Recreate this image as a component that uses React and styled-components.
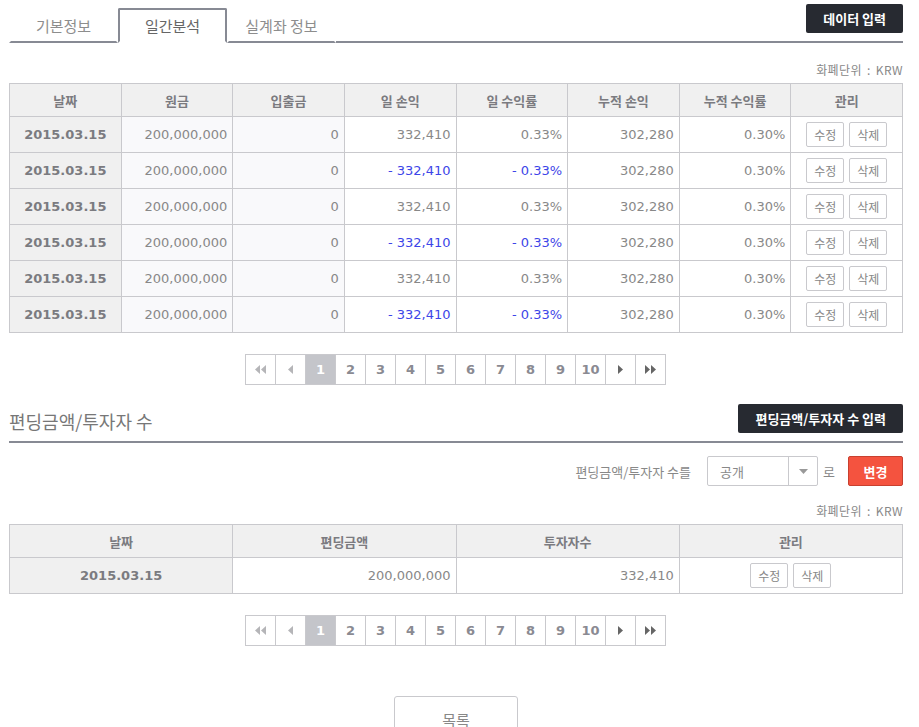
import React, { useState } from 'react'
import styled, { createGlobalStyle } from 'styled-components'

const GlobalStyle = createGlobalStyle`
  body {
    margin: 0;
    background: #fff;
    font-family: "DejaVu Sans", "Noto Sans CJK KR", sans-serif;
    color: #888;
  }
  * { box-sizing: border-box; }
`

const rows = [
  { date: '2015.03.15', principal: '200,000,000', flow: '0', day: '332,410', dayRate: '0.33%', cum: '302,280', cumRate: '0.30%', neg: false },
  { date: '2015.03.15', principal: '200,000,000', flow: '0', day: '332,410', dayRate: '0.33%', cum: '302,280', cumRate: '0.30%', neg: true },
  { date: '2015.03.15', principal: '200,000,000', flow: '0', day: '332,410', dayRate: '0.33%', cum: '302,280', cumRate: '0.30%', neg: false },
  { date: '2015.03.15', principal: '200,000,000', flow: '0', day: '332,410', dayRate: '0.33%', cum: '302,280', cumRate: '0.30%', neg: true },
  { date: '2015.03.15', principal: '200,000,000', flow: '0', day: '332,410', dayRate: '0.33%', cum: '302,280', cumRate: '0.30%', neg: false },
  { date: '2015.03.15', principal: '200,000,000', flow: '0', day: '332,410', dayRate: '0.33%', cum: '302,280', cumRate: '0.30%', neg: true },
]

const tabs = ['기본정보', '일간분석', '실계좌 정보']

export default function App() {
  const [tab, setTab] = useState(1)
  const [page, setPage] = useState(1)
  const [page2, setPage2] = useState(1)

  return (
    <>
      <GlobalStyle />
      <Page>
        <TopBar>
          <Tabs>
            {tabs.map((t, i) => (
              <Tab key={t} $active={i === tab} onClick={() => setTab(i)}>{t}</Tab>
            ))}
          </Tabs>
          <DarkButton $top={4}>데이터 입력</DarkButton>
        </TopBar>

        <Unit $top={19}>화폐단위 : KRW</Unit>
        <Table>
          <colgroup>
            {Array.from({ length: 8 }).map((_, i) => <col key={i} style={{ width: '12.5%' }} />)}
          </colgroup>
          <thead>
            <tr>
              {['날짜', '원금', '입출금', '일 손익', '일 수익률', '누적 손익', '누적 수익률', '관리'].map(h => (
                <Th key={h}>{h}</Th>
              ))}
            </tr>
          </thead>
          <tbody>
            {rows.map((r, i) => (
              <Tr key={i}>
                <DateCell>{r.date}</DateCell>
                <Td $tint>{r.principal}</Td>
                <Td $tint>{r.flow}</Td>
                <Td $neg={r.neg}>{r.neg ? '- ' : ''}{r.day}</Td>
                <Td $neg={r.neg}>{r.neg ? '- ' : ''}{r.dayRate}</Td>
                <Td>{r.cum}</Td>
                <Td>{r.cumRate}</Td>
                <ActionCell>
                  <SmallButton>수정</SmallButton>
                  <SmallButton>삭제</SmallButton>
                </ActionCell>
              </Tr>
            ))}
          </tbody>
        </Table>

        <Pagination page={page} onChange={setPage} />

        <SectionHead>
          <SectionTitle>편딩금액/투자자 수</SectionTitle>
          <DarkButton>편딩금액/투자자 수 입력</DarkButton>
        </SectionHead>

        <FilterRow>
          <FilterLabel>편딩금액/투자자 수를</FilterLabel>
          <Select>
            <SelectValue>공개</SelectValue>
            <SelectArrow>
              <svg width="9" height="5" viewBox="0 0 9 5"><path d="M0 0h9L4.5 5z" fill="#999" /></svg>
            </SelectArrow>
          </Select>
          <Suffix>로</Suffix>
          <RedButton>변경</RedButton>
        </FilterRow>

        <Unit $top={17}>화폐단위 : KRW</Unit>
        <Table>
          <colgroup>
            {Array.from({ length: 4 }).map((_, i) => <col key={i} style={{ width: '25%' }} />)}
          </colgroup>
          <thead>
            <tr>
              {['날짜', '편딩금액', '투자자수', '관리'].map(h => <Th key={h}>{h}</Th>)}
            </tr>
          </thead>
          <tbody>
            <Tr>
              <DateCell>2015.03.15</DateCell>
              <Td>200,000,000</Td>
              <Td>332,410</Td>
              <ActionCell>
                <SmallButton>수정</SmallButton>
                <SmallButton>삭제</SmallButton>
              </ActionCell>
            </Tr>
          </tbody>
        </Table>

        <Pagination page={page2} onChange={setPage2} />

        <Footer>
          <ListButton>목록</ListButton>
        </Footer>
      </Page>
    </>
  )
}

function Pagination({ page, onChange }) {
  return (
    <Pager>
      <PageCell><Arrow dir="left" double faded /></PageCell>
      <PageCell><Arrow dir="left" faded /></PageCell>
      {Array.from({ length: 10 }).map((_, i) => (
        <PageCell key={i} $active={page === i + 1} onClick={() => onChange(i + 1)}>{i + 1}</PageCell>
      ))}
      <PageCell><Arrow dir="right" /></PageCell>
      <PageCell><Arrow dir="right" double /></PageCell>
    </Pager>
  )
}

function Arrow({ dir, double, faded }) {
  const color = faded ? '#b5b5b8' : '#666'
  const tri = (x) => dir === 'left'
    ? `M${x + 5} 0v9L${x} 4.5z`
    : `M${x} 0v9L${x + 5} 4.5z`
  return (
    <svg width={double ? 11 : 5} height="9" viewBox={`0 0 ${double ? 11 : 5} 9`}>
      <path d={tri(0)} fill={color} />
      {double && <path d={tri(6)} fill={color} />}
    </svg>
  )
}

const Page = styled.div`
  width: 894px;
  margin-left: 9px;
  font-size: 13px;
`

const TopBar = styled.div`
  display: flex;
  justify-content: space-between;
  align-items: flex-start;
  height: 43px;
  border-bottom: 2px solid #878a94;
`

const Tabs = styled.div`
  display: flex;
  align-self: flex-end;
  margin-bottom: -2px;
`

const Tab = styled.div`
  width: 109px;
  height: 35px;
  display: flex;
  align-items: center;
  justify-content: center;
  padding-bottom: 1px;
  font-family: "Noto Sans CJK KR", sans-serif;
  font-size: 15px;
  cursor: pointer;
  color: ${p => (p.$active ? '#666' : '#8d8d8d')};
  background: #fff;
  border: 2px solid ${p => (p.$active ? '#878a94' : 'transparent')};
  border-bottom: 2px solid ${p => (p.$active ? '#fff' : '#878a94')};
  border-radius: 2px 2px 0 0;
`

const DarkButton = styled.button`
  margin-top: ${p => p.$top || 0}px;
  height: 29px;
  padding: 0 17px;
  border: none;
  border-radius: 2px;
  background: #272a31;
  color: #fff;
  font-family: "Noto Sans CJK KR", sans-serif;
  font-size: 13px;
  font-weight: 700;
  cursor: pointer;
`

const Unit = styled.div`
  margin-top: ${p => p.$top}px;
  margin-bottom: 5px;
  text-align: right;
  font-family: "Noto Sans CJK KR", sans-serif;
  font-size: 12px;
  line-height: 16px;
  letter-spacing: 0.4px;
  word-spacing: 2px;
  color: #888;
`

const Table = styled.table`
  width: 100%;
  border-collapse: collapse;
  table-layout: fixed;
  border: 1px solid #c9c9cd;
`

const Th = styled.th`
  height: 33px;
  background: #f0f0f0;
  border: 1px solid #c9c9cd;
  font-family: "Noto Sans CJK KR", sans-serif;
  font-size: 13px;
  font-weight: 700;
  color: #7b7b80;
  text-align: center;
  padding: 0;
`

const Tr = styled.tr`
  height: 36px;
`

const Td = styled.td`
  border: 1px solid #c9c9cd;
  padding: 0 5px 0 0;
  text-align: right;
  font-size: 13px;
  color: ${p => (p.$neg ? '#3d45e8' : '#888')};
  background: ${p => (p.$tint ? '#f9f9fb' : '#fff')};
  white-space: nowrap;
`

const DateCell = styled.td`
  border: 1px solid #c9c9cd;
  background: #f0f0f0;
  text-align: center;
  font-weight: 700;
  color: #7b7b80;
  font-size: 13px;
`

const ActionCell = styled.td`
  border: 1px solid #c9c9cd;
  text-align: center;
  padding: 0;
  font-size: 0;
  & > button + button { margin-left: 5px; }
`

const SmallButton = styled.button`
  width: 38px;
  height: 25px;
  padding: 0;
  background: #fff;
  border: 1px solid #c9c9cd;
  border-radius: 2px;
  font-family: "Noto Sans CJK KR", sans-serif;
  font-size: 12px;
  color: #888;
  cursor: pointer;
  vertical-align: middle;
`

const Pager = styled.div`
  display: flex;
  justify-content: center;
  margin-top: 21px;
`

const PageCell = styled.div`
  width: 31px;
  height: 31px;
  margin-left: -1px;
  display: flex;
  align-items: center;
  justify-content: center;
  border: 1px solid #c9c9cd;
  background: ${p => (p.$active ? '#c4c5ca' : '#fff')};
  color: ${p => (p.$active ? '#fff' : '#8a8a92')};
  font-weight: 700;
  font-size: 13px;
  cursor: pointer;
`

const SectionHead = styled.div`
  display: flex;
  justify-content: space-between;
  align-items: flex-end;
  margin-top: 19px;
  padding-bottom: 8px;
  border-bottom: 2px solid #878a94;
`

const SectionTitle = styled.h3`
  margin: 0;
  font-family: "Noto Sans CJK KR", sans-serif;
  font-size: 18px;
  line-height: 24px;
  font-weight: 400;
  color: #777;
`

const FilterRow = styled.div`
  display: flex;
  justify-content: flex-end;
  align-items: center;
  margin-top: 13px;
`

const FilterLabel = styled.span`
  margin-right: 16px;
  font-family: "Noto Sans CJK KR", sans-serif;
  font-size: 13px;
  color: #888;
`

const Suffix = styled.span`
  margin: 0 13px 0 5px;
  font-family: "Noto Sans CJK KR", sans-serif;
  font-size: 13px;
  color: #888;
`

const Select = styled.div`
  display: flex;
  width: 111px;
  height: 30px;
  border: 1px solid #c9c9cd;
  border-radius: 2px;
`

const SelectValue = styled.div`
  flex: 1;
  display: flex;
  align-items: center;
  padding-left: 12px;
  font-family: "Noto Sans CJK KR", sans-serif;
  font-size: 13px;
  color: #888;
`

const SelectArrow = styled.div`
  width: 29px;
  display: flex;
  align-items: center;
  justify-content: center;
  border-left: 1px solid #c9c9cd;
`

const RedButton = styled.button`
  width: 55px;
  height: 30px;
  background: #f4533f;
  border: 1px solid #c8402f;
  border-radius: 2px;
  color: #fff;
  font-family: "Noto Sans CJK KR", sans-serif;
  font-weight: 700;
  font-size: 13px;
  cursor: pointer;
`

const Footer = styled.div`
  display: flex;
  justify-content: center;
  margin-top: 50px;
`

const ListButton = styled.button`
  width: 124px;
  height: 46px;
  background: #fff;
  border: 1px solid #c9c9cd;
  border-radius: 3px;
  font-family: "Noto Sans CJK KR", sans-serif;
  font-size: 15px;
  color: #888;
  cursor: pointer;
`
